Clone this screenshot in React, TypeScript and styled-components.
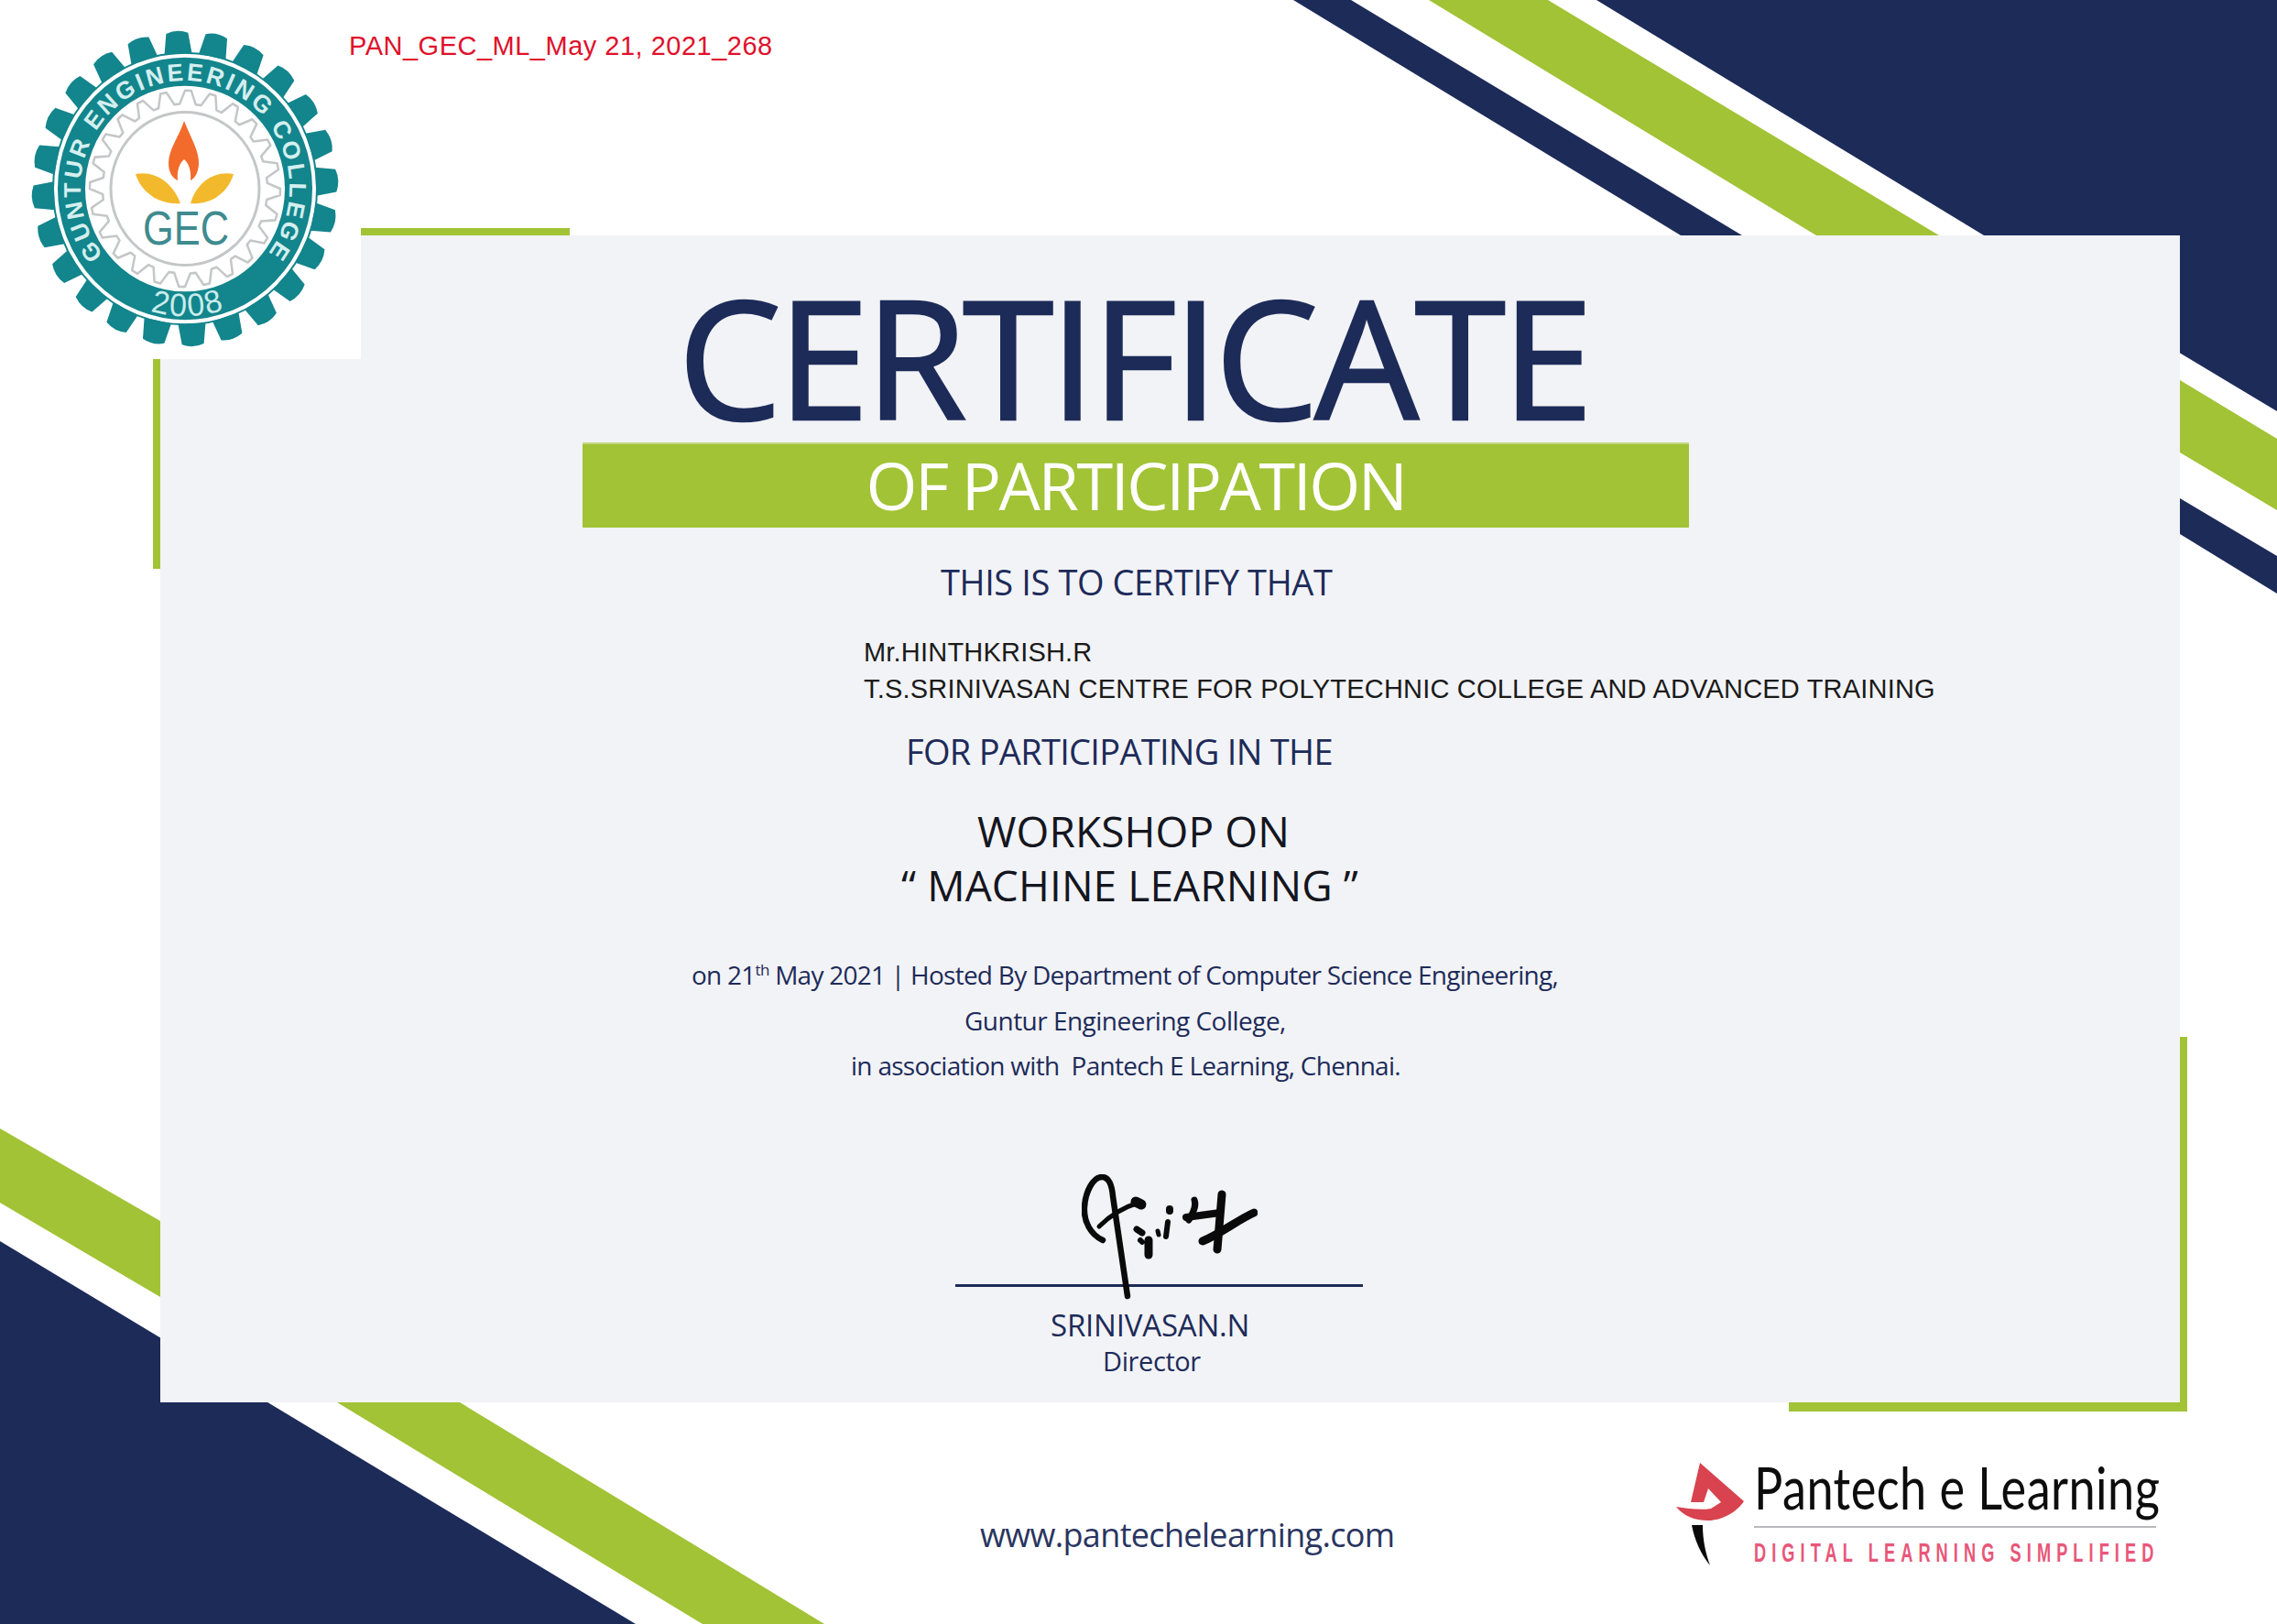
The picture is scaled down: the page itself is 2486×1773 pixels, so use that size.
import React from 'react';
import styled, { createGlobalStyle } from 'styled-components';

const NAVY = '#1d2b59';
const GREEN = '#a1c335';
const TEAL = '#13858c';

const GlobalStyle = createGlobalStyle`
  html, body {
    margin: 0;
    padding: 0;
    background: #ffffff;
  }
`;

const Page = styled.div`
  position: relative;
  width: 2486px;
  height: 1773px;
  overflow: hidden;
  background: #ffffff;
  font-family: 'Open Sans', 'Noto Sans', sans-serif;
`;

const Backdrop = styled.svg`
  position: absolute;
  top: 0;
  left: 0;
`;

const TopRow = styled.header`
  position: relative;
  box-sizing: border-box;
  height: 257px;
  padding: 30px 0 0 381px;
`;

const RefCode = styled.div`
  font-family: 'Liberation Sans', Arial, sans-serif;
  font-size: 29px;
  line-height: 40px;
  letter-spacing: 0.5px;
  color: #e0112b;
`;

const Crest = styled.svg`
  position: absolute;
  top: 0;
  left: 0;
  z-index: 3;
`;

const Panel = styled.main`
  position: relative;
  box-sizing: border-box;
  display: flex;
  flex-direction: column;
  align-items: flex-start;
  width: 2205px;
  height: 1274px;
  margin-left: 175px;
  background: #f2f3f6;
  color: ${NAVY};
`;

const CornerPatch = styled.div`
  position: absolute;
  top: 0;
  left: 0;
  width: 219px;
  height: 135px;
  background: #ffffff;
`;

const AccentTop = styled.div`
  position: absolute;
  top: -8px;
  left: 219px;
  width: 228px;
  height: 8px;
  background: ${GREEN};
`;

const AccentLeft = styled.div`
  position: absolute;
  top: 135px;
  left: -8px;
  width: 8px;
  height: 229px;
  background: ${GREEN};
`;

const AccentRight = styled.div`
  position: absolute;
  top: 875px;
  right: -8px;
  width: 8px;
  height: 409px;
  background: ${GREEN};
`;

const AccentBottom = styled.div`
  position: absolute;
  bottom: -10px;
  right: -8px;
  width: 435px;
  height: 10px;
  background: ${GREEN};
`;

const Title = styled.h1`
  margin: 41px 0 0 565px;
  font-size: 180px;
  font-weight: 400;
  line-height: 182px;
  letter-spacing: -4.4px;
  -webkit-text-stroke: 2.5px ${NAVY};
  white-space: nowrap;
  color: ${NAVY};
`;

const Ribbon = styled.div`
  display: flex;
  justify-content: center;
  align-items: center;
  box-sizing: border-box;
  width: 1208px;
  height: 91px;
  margin: 5px 0 0 461px;
  padding-bottom: 3px;
  background: ${GREEN};
  box-shadow: 0 -2px 0 #c3d87e;
  color: #ffffff;
  font-size: 72px;
  letter-spacing: -2.5px;
  white-space: nowrap;
`;

const Lead = styled.div<{ $left: number; $top: number; $spacing: number }>`
  margin: ${(p) => p.$top}px 0 0 ${(p) => p.$left}px;
  font-size: 38px;
  line-height: 50px;
  letter-spacing: ${(p) => p.$spacing}px;
  white-space: nowrap;
`;

const Recipient = styled.div<{ $top: number }>`
  margin: ${(p) => p.$top}px 0 0 768px;
  font-family: 'Liberation Sans', Arial, sans-serif;
  font-size: 29px;
  line-height: 40px;
  letter-spacing: 0.2px;
  color: #1a1a1a;
  white-space: nowrap;
`;

const Workshop = styled.div<{ $left: number; $top: number }>`
  margin: ${(p) => p.$top}px 0 0 ${(p) => p.$left}px;
  font-size: 46px;
  line-height: 59px;
  letter-spacing: 0.1px;
  color: #14161f;
  white-space: pre;
`;

const Detail = styled.div<{ $left: number; $top: number; $spacing: number }>`
  margin: ${(p) => p.$top}px 0 0 ${(p) => p.$left}px;
  font-size: 28px;
  line-height: 49.5px;
  letter-spacing: ${(p) => p.$spacing}px;
  white-space: pre;

  sup {
    font-size: 17px;
    line-height: 0;
  }
`;

const SignatureBlock = styled.div`
  position: relative;
  box-sizing: border-box;
  width: 445px;
  height: 123px;
  margin: 93px 0 0 868px;
  border-bottom: 3px solid ${NAVY};
`;

const Signature = styled.svg`
  position: absolute;
  top: 0;
  left: 138px;
`;

const SignerName = styled.div`
  margin: 24px 0 0 972px;
  font-size: 33px;
  line-height: 36px;
  letter-spacing: -0.2px;
  white-space: nowrap;
`;

const SignerRole = styled.div`
  margin: 3px 0 0 1029px;
  font-size: 29px;
  line-height: 36px;
  letter-spacing: -0.4px;
  white-space: nowrap;
`;

const Footer = styled.footer`
  position: relative;
  display: flex;
  align-items: flex-start;
  height: 242px;
  padding-left: 1070px;
`;

const Website = styled.div`
  width: 760px;
  margin-top: 120px;
  font-size: 36px;
  line-height: 50px;
  letter-spacing: -0.66px;
  color: #2a3560;
  white-space: nowrap;
`;

const Brand = styled.div`
  display: flex;
  gap: 11px;
  margin-top: 66px;
`;

const BrandText = styled.div`
  display: flex;
  flex-direction: column;
  width: 439px;
`;

const BrandName = styled.div`
  margin: -3px 0 3px 0;
  font-family: 'Lato', sans-serif;
  font-size: 63px;
  font-weight: 400;
  line-height: 60px;
  letter-spacing: 0.5px;
  color: #0d0d0d;
  white-space: nowrap;
  transform: scaleX(0.83);
  transform-origin: left center;
`;

const BrandRule = styled.div`
  height: 2px;
  margin-top: 9px;
  background: #b9b9bd;
`;

const BrandTag = styled.div`
  margin-top: 12px;
  font-family: 'Liberation Sans', Arial, sans-serif;
  font-size: 30px;
  font-weight: 700;
  line-height: 30px;
  letter-spacing: 10px;
  color: #e8577a;
  white-space: nowrap;
  transform: scaleX(0.607);
  transform-origin: left center;
`;

const teeth = Array.from({ length: 24 }, (_, i) => i * 15 - 3);

const wavyRing = (() => {
  const bumps = 24;
  const parts: string[] = [];
  for (let i = 0; i < bumps * 4; i++) {
    const a = (i / (bumps * 4)) * Math.PI * 2;
    const r = i % 4 === 0 || i % 4 === 1 ? 104 : 90;
    parts.push(`${(r * Math.cos(a)).toFixed(1)},${(r * Math.sin(a)).toFixed(1)}`);
  }
  return parts.join(' ');
})();

const CollegeCrest = () => (
  <Crest width={400} height={400} viewBox="0 0 400 400">
    <g transform="translate(202 206) scale(1 1.03)">
      {teeth.map((a) => (
        <path
          key={a}
          d="M-15 -143 L-12 -165 Q0 -170 12 -165 L15 -143 Z"
          fill={TEAL}
          transform={`rotate(${a})`}
        />
      ))}
      <circle r="144" fill="none" stroke={TEAL} strokeWidth="2" />
      <circle r="124" fill="none" stroke={TEAL} strokeWidth="30" />
      <polygon points={wavyRing} fill="none" stroke="#c4c6c7" strokeWidth="2.5" strokeLinejoin="round" />
      <circle r="81" fill="#ffffff" stroke="#c4c6c7" strokeWidth="3" />
      <path id="crestTop" d="M-73 87 A114 114 0 1 1 73 87" fill="none" />
      <path id="crestBottom" d="M-60 121 A135 135 0 0 0 66 118" fill="none" />
      <text fontFamily="'Liberation Sans', sans-serif" fontSize="26" fontWeight="700" fill="#d4efef" letterSpacing="3">
        <textPath href="#crestTop" startOffset="50%" textAnchor="middle">
          GUNTUR ENGINEERING COLLEGE
        </textPath>
      </text>
      <text fontFamily="'Liberation Sans', sans-serif" fontSize="34" fill="#c9ecec" letterSpacing="2">
        <textPath href="#crestBottom" startOffset="50%" textAnchor="middle">
          2008
        </textPath>
      </text>
    </g>
    <path
      d="M201 132 C208 150 218 165 217 180 C216 190 212 195 208 197 C209 186 206 178 201 174 C196 178 193 186 194 197 C188 194 184 188 184 178 C184 163 195 150 201 132 Z"
      fill="#f26b2b"
    />
    <path d="M148 190 C168 186 188 198 197 222 C174 224 154 210 148 190 Z" fill="#f3b92c" />
    <path d="M255 190 C235 186 215 198 208 222 C231 224 249 210 255 190 Z" fill="#f3b92c" />
    <text
      x="203"
      y="267"
      textAnchor="middle"
      textLength="94"
      lengthAdjust="spacingAndGlyphs"
      fontFamily="'Liberation Sans', sans-serif"
      fontSize="52"
      fill="#3f8b8f"
    >
      GEC
    </text>
  </Crest>
);

const DirectorSignature = () => (
  <Signature width={192} height={138} viewBox="0 0 192 138">
    <g fill="none" stroke="#0a0a0a" strokeLinecap="round" strokeLinejoin="round">
      <path d="M23 72 C10 66 2 52 3 36 C4 18 13 3 22 3 C30 3 33 12 34 24 L50 133" strokeWidth="6.5" />
      <path d="M19 57 C30 46 46 36 62 31" strokeWidth="5" />
      <path d="M59 30 L65 33" strokeWidth="11" />
      <path d="M60 60 L66 64" strokeWidth="7" />
      <path d="M64 72 L66 74" strokeWidth="6" />
      <path d="M73 72 L73 88" strokeWidth="9" />
      <path d="M94 52 L92 68" strokeWidth="6" />
      <path d="M83 62 L84 66" strokeWidth="5" />
      <path d="M96 38 L96 40" strokeWidth="8" />
      <path d="M114 47 L151 42" strokeWidth="8" />
      <path d="M123 28 C126 36 120 44 117 50" strokeWidth="7" />
      <path d="M153 22 L148 82" strokeWidth="9" />
      <path d="M132 73 C150 66 170 50 188 42" strokeWidth="9" />
    </g>
  </Signature>
);

const PantechMark = () => (
  <svg width={74} height={112} viewBox="0 0 74 112">
    <path
      d="M26 0 L74 42 C66 54 50 63 35 63 C20 63 8 58 0 48 C12 50 28 52 38 50 L49 43 L35 28 L30 43 L16 43 Z"
      fill="#d8434f"
    />
    <path d="M17 68 L29 68 C29 84 32 98 37 112 C27 100 20 84 17 68 Z" fill="#0a0a0a" />
  </svg>
);

export default function App() {
  return (
    <Page>
      <GlobalStyle />
      <Backdrop width={2486} height={1773} viewBox="0 0 2486 1773">
        <polygon points="1412,0 1475,0 1902,257 1835,257" fill={NAVY} />
        <polygon points="1560,0 1690,0 2117,257 1983,257" fill={GREEN} />
        <polygon points="1743,0 2486,0 2486,449 2166,257" fill={NAVY} />
        <polygon points="2380,415 2486,479 2486,557 2380,494" fill={GREEN} />
        <polygon points="2380,544 2486,607 2486,648 2380,583" fill={NAVY} />
        <polygon points="0,1232 175,1333 175,1416 0,1313" fill={GREEN} />
        <polygon points="0,1355 694,1773 0,1773" fill={NAVY} />
        <polygon points="368,1531 502,1531 900,1773 767,1773" fill={GREEN} />
      </Backdrop>
      <TopRow>
        <RefCode>PAN_GEC_ML_May 21, 2021_268</RefCode>
        <CollegeCrest />
      </TopRow>
      <Panel>
        <CornerPatch />
        <AccentTop />
        <AccentLeft />
        <AccentRight />
        <AccentBottom />
        <Title>CERTIFICATE</Title>
        <Ribbon>OF PARTICIPATION</Ribbon>
        <Lead $left={852} $top={34} $spacing={-0.4}>THIS IS TO CERTIFY THAT</Lead>
        <Recipient $top={32}>Mr.HINTHKRISH.R</Recipient>
        <Recipient $top={0}>T.S.SRINIVASAN CENTRE FOR POLYTECHNIC COLLEGE AND ADVANCED TRAINING</Recipient>
        <Lead $left={814} $top={23} $spacing={-0.7}>FOR PARTICIPATING IN THE</Lead>
        <Workshop $left={892} $top={33}>WORKSHOP ON</Workshop>
        <Workshop $left={809} $top={0}>{'“ MACHINE LEARNING ”'}</Workshop>
        <Detail $left={580} $top={44} $spacing={-0.74}>
          on 21<sup>th</sup> May 2021 | Hosted By Department of Computer Science Engineering,
        </Detail>
        <Detail $left={878} $top={0} $spacing={-0.52}>Guntur Engineering College,</Detail>
        <Detail $left={754} $top={0} $spacing={-0.71}>in association with  Pantech E Learning, Chennai.</Detail>
        <SignatureBlock>
          <DirectorSignature />
        </SignatureBlock>
        <SignerName>SRINIVASAN.N</SignerName>
        <SignerRole>Director</SignerRole>
      </Panel>
      <Footer>
        <Website>www.pantechelearning.com</Website>
        <Brand>
          <PantechMark />
          <BrandText>
            <BrandName>Pantech e Learning</BrandName>
            <BrandRule />
            <BrandTag>DIGITAL LEARNING SIMPLIFIED</BrandTag>
          </BrandText>
        </Brand>
      </Footer>
    </Page>
  );
}
